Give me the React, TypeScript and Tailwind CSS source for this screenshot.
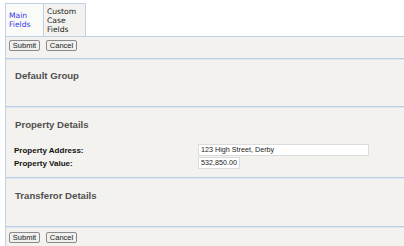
const sans = { fontFamily: '"Liberation Sans", Arial, sans-serif' };
const verdana = { fontFamily: '"DejaVu Sans", Verdana, sans-serif' };

function Buttons() {
    return (
        <div className="flex items-center gap-[6px] pl-[3px]">
            <button className="h-[11px] w-[31px] rounded-[2px] border border-[#8a8a8a] bg-[#f0f0ee] text-[7.5px] leading-[9px] text-[#222]">
                Submit
            </button>
            <button className="h-[11px] w-[31px] rounded-[2px] border border-[#8a8a8a] bg-[#f0f0ee] text-[7.5px] leading-[9px] text-[#222]">
                Cancel
            </button>
        </div>
    );
}

function Divider() {
    return (
        <div className="flex flex-col">
            <div className="h-px bg-[#b9cde9]" />
            <div className="h-px bg-[#dde6f1]" />
        </div>
    );
}

function Heading({ children }: { children: string }) {
    return <h2 className="pl-[9px] text-[9.6px] font-bold leading-[12px] text-[#505050]">{children}</h2>;
}

export default function App() {
    return (
        <div className="h-[246px] w-[404px] overflow-hidden bg-white pl-[5px] pt-[3px]" style={sans}>
            <div className="flex h-[33px] items-stretch" style={verdana}>
                <div className="flex w-[38px] items-center border-l border-t border-[#bfd0e8] bg-[#fafaf7] pl-[3px] text-[7.6px] leading-[9px] text-[#3535e8]">
                    Main
                    <br />
                    Fields
                </div>
                <div className="flex w-[43px] flex-col justify-center border-x border-t border-[#bfd0e8] bg-[#f3f2ee] pl-[3px] text-[7.6px] leading-[9px] text-[#222]">
                    <span>Custom</span>
                    <span>Case</span>
                    <span>Fields</span>
                </div>
            </div>
            <div className="flex h-[213px] flex-col border-l border-t border-[#bfd0e8] bg-[#f3f2ee]">
                <div className="flex h-[21px] items-start pt-[3px]">
                    <Buttons />
                </div>
                <Divider />
                <section className="h-[46px] pt-[10px]">
                    <Heading>Default Group</Heading>
                </section>
                <Divider />
                <section className="h-[69px] pt-[11px]">
                    <Heading>Property Details</Heading>
                    <div className="mt-[13px] flex flex-col gap-[1px] pl-[8px]">
                        <div className="flex items-center">
                            <label className="w-[184px] text-[8px] font-bold leading-[11px] text-[#111]">Property Address:</label>
                            <div className="h-[12px] w-[171px] border border-[#dcdcdc] bg-white pl-[2px] text-[7.2px] leading-[10px] text-[#222]">
                                123 High Street, Derby
                            </div>
                        </div>
                        <div className="flex items-center">
                            <label className="w-[184px] text-[8px] font-bold leading-[11px] text-[#111]">Property Value:</label>
                            <div className="h-[12px] w-[42px] border border-[#dcdcdc] bg-white text-center text-[7.2px] leading-[10px] text-[#222]">
                                532,850.00
                            </div>
                        </div>
                    </div>
                </section>
                <Divider />
                <section className="h-[47px] pt-[11px]">
                    <Heading>Transferor Details</Heading>
                </section>
                <Divider />
                <div className="flex h-[16px] items-center pt-[2px]">
                    <Buttons />
                </div>
            </div>
        </div>
    );
}
